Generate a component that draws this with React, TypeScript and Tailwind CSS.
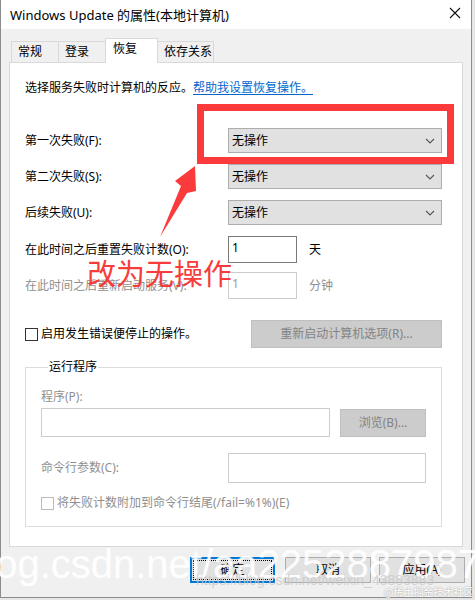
function Dropdown() {
  return (
    <div className="flex items-center justify-between w-[214px] h-[25px] bg-[#e1e1e1] border border-[#adadad] pl-[3px] pr-[6px]">
      <span>无操作</span>
      <svg width="10" height="6" viewBox="0 0 10 6">
        <path d="M1 1 L5 5 L9 1" fill="none" stroke="#555" strokeWidth="1.1" />
      </svg>
    </div>
  )
}

function Label({ children, disabled }: { children: React.ReactNode; disabled?: boolean }) {
  return <div className={disabled ? 'w-[203px] text-[#8f8f8f]' : 'w-[203px]'}>{children}</div>
}

function Tab({ label, width, active }: { label: string; width: string; active?: boolean }) {
  if (active) {
    return (
      <div className={`${width} h-[25px] -ml-px -mb-px z-10 bg-white border border-b-0 border-[#d9d9d9] pl-[7px] pt-[2px]`}>
        {label}
      </div>
    )
  }
  return (
    <div className={`${width} h-[21px] -ml-px bg-[#f0f0f0] border border-b-0 border-[#d9d9d9] pl-[6px] pt-[2px]`}>
      {label}
    </div>
  )
}

export default function App() {
  return (
    <div className="relative w-[475px] h-[600px] overflow-hidden bg-[#e6e6e6] font-['Noto_Sans','Noto_Sans_CJK_SC',sans-serif] text-[12px] leading-[16px] text-black">
      <div className="flex flex-col w-[472px] h-[598px] bg-[#f0f0f0] border-l border-r border-b border-[#8c8c8c]">
        {/* title bar */}
        <div className="flex items-center justify-between h-[29px] bg-white pl-[9px] pr-[10px]">
          <span className="text-[13px]">Windows Update 的属性(本地计算机)</span>
          <svg width="12" height="12" viewBox="0 0 12 12" className="mb-[3px]">
            <path d="M1 1 L11 11 M11 1 L1 11" stroke="#111" strokeWidth="1.1" />
          </svg>
        </div>

        <div className="flex flex-col ml-[8px] mt-[9px]">
          {/* tabs */}
          <div className="flex items-end h-[24px] pl-[3px]">
            <Tab label="常规" width="w-[48px]" />
            <Tab label="登录" width="w-[48px]" />
            <Tab label="恢复" width="w-[53px]" active />
            <Tab label="依存关系" width="w-[57px]" />
          </div>

          {/* tab page */}
          <div className="w-[454px] h-[485px] bg-white border border-[#d9d9d9] pl-[15px] pt-[17px]">
            <div className="flex h-[16px] items-center">
              <span>选择服务失败时计算机的反应。</span>
              <span className="text-[#0066cc] underline underline-offset-2">帮助我设置恢复操作。</span>
            </div>

            <div className="flex items-center h-[25px] mt-[32px]">
              <Label>第一次失败(F):</Label>
              <Dropdown />
            </div>
            <div className="flex items-center h-[25px] mt-[11px]">
              <Label>第二次失败(S):</Label>
              <Dropdown />
            </div>
            <div className="flex items-center h-[25px] mt-[11px]">
              <Label>后续失败(U):</Label>
              <Dropdown />
            </div>

            <div className="flex items-center h-[27px] mt-[11px]">
              <Label>在此时间之后重置失败计数(O):</Label>
              <div className="w-[69px] h-[27px] border border-[#7a7a7a] pl-[3px] pt-[3px]">1</div>
              <span className="ml-[12px]">天</span>
            </div>
            <div className="flex items-center h-[27px] mt-[9px]">
              <Label disabled>在此时间之后重新启动服务(V):</Label>
              <div className="w-[69px] h-[27px] border border-[#cccccc] pl-[3px] pt-[3px] text-[#9a9a9a]">1</div>
              <span className="ml-[12px] text-[#8f8f8f]">分钟</span>
            </div>

            <div className="flex items-center justify-between w-[417px] h-[28px] mt-[21px]">
              <div className="flex items-center">
                <div className="w-[13px] h-[13px] border border-[#333]" />
                <span className="ml-[3px]">启用发生错误便停止的操作。</span>
              </div>
              <div className="flex items-center justify-center w-[191px] h-[28px] bg-[#cccccc] border border-[#bfbfbf] text-[#838383]">
                重新启动计算机选项(R)...
              </div>
            </div>

            <fieldset className="w-[417px] mt-[11px] border border-[#dcdcdc] pl-[15px] pr-[15px] pb-[16px]">
              <legend className="ml-[7px] px-[1px]">运行程序</legend>
              <div className="h-[16px] mt-[14px] text-[#8f8f8f]">程序(P):</div>
              <div className="flex items-center justify-between mt-[3px]">
                <div className="w-[289px] h-[29px] border border-[#cccccc]" />
                <div className="flex items-center justify-center w-[86px] h-[28px] bg-[#cccccc] border border-[#bfbfbf] text-[#838383]">
                  浏览(B)...
                </div>
              </div>
              <div className="flex items-center justify-between h-[30px] mt-[16px]">
                <span className="text-[#8f8f8f]">命令行参数(C):</span>
                <div className="w-[198px] h-[30px] border border-[#cccccc]" />
              </div>
              <div className="flex items-center h-[14px] mt-[13px] text-[#8f8f8f]">
                <div className="w-[13px] h-[13px] border border-[#bcbcbc]" />
                <span className="ml-[3px]">将失败计数附加到命令行结尾(/fail=%1%)(E)</span>
              </div>
            </fieldset>
          </div>
        </div>

        {/* dialog buttons */}
        <div className="flex justify-end mt-[10px] pr-[6px]">
          <div className="w-[85px] h-[26px] border-2 border-[#0078d7] bg-[#e1e1e1] p-[1px]">
            <div className="flex items-center justify-center w-full h-full border border-dotted border-black">确定</div>
          </div>
          <div className="flex items-center justify-center w-[86px] h-[26px] ml-[10px] bg-[#e1e1e1] border border-[#adadad]">取消</div>
          <div className="flex items-center justify-center w-[86px] h-[26px] ml-[8px] bg-[#e1e1e1] border border-[#adadad]">应用(A)</div>
        </div>
      </div>

      {/* annotation overlay */}
      <div className="absolute left-[197px] top-[104px] w-[257px] h-[60px] border-[7px] border-[#fb3b3b]" />
      <svg className="absolute left-0 top-0" width="475" height="600">
        <polygon points="195,166 196,191 187,193 160,237 181,186 175,181" fill="#fb3b3b" />
      </svg>
      <div className="absolute left-[87px] top-[256px] text-[29px] leading-[32px] text-[#f83b3b] font-['Noto_Sans_CJK_SC',sans-serif]">
        改为无操作
      </div>

      {/* watermarks */}
      <div className="absolute left-[-36px] top-[544px] text-[40px] leading-none text-white/90 font-['Liberation_Sans',sans-serif] whitespace-nowrap">
        blog.csdn.net/aa2252887987
      </div>
      <div className="absolute left-[196px] top-[573px] text-[14px] leading-none text-[#c8c8c8]/80 font-['Liberation_Sans',sans-serif] whitespace-nowrap">
        https://blog.csdn.net/weixin_43883883
      </div>
      <div className="absolute left-[384px] top-[587px] text-[10px] leading-none text-white font-['Noto_Sans_CJK_SC',sans-serif] whitespace-nowrap [text-shadow:0_0_2px_#888]">
        @稀土掘金技术社区
      </div>
    </div>
  )
}
